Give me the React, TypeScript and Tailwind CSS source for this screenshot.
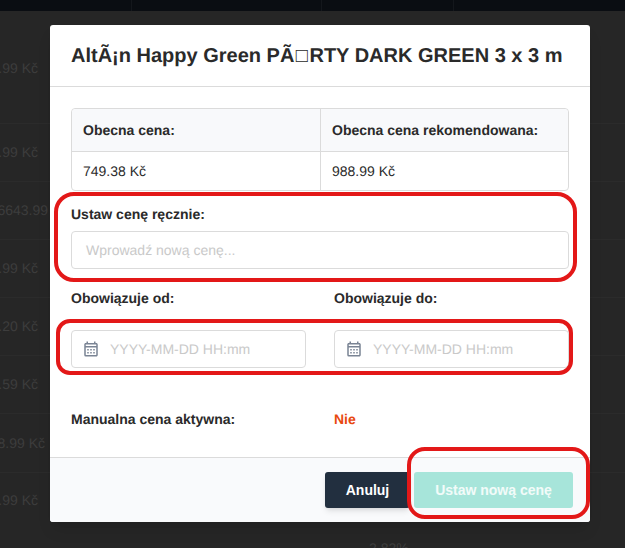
import { MdOutlineCalendarMonth } from 'react-icons/md'

const rows = [
  { h: 'h-[58px]', w: 'w-[38px]', text: '.99 Kč' },
  { h: 'h-[58px]', w: 'w-[48px]', text: '6643.99' },
  { h: 'h-[58px]', w: 'w-[38px]', text: '.99 Kč' },
  { h: 'h-[58px]', w: 'w-[38px]', text: '.20 Kč' },
  { h: 'h-[58px]', w: 'w-[38px]', text: '.59 Kč' },
  { h: 'h-[59px]', w: 'w-[45px]', text: '8.99 Kč' },
  { h: 'h-[56px]', w: 'w-[38px]', text: '.99 Kč' },
]

function DateField() {
  return (
    <div className="flex h-[38px] w-[235px] items-center rounded border border-[#dbdbdb] bg-white">
      <MdOutlineCalendarMonth className="ml-[10px] text-[18px] text-[#7a8494]" />
      <span className="ml-[10px] text-[14px] text-[#c9c9c9]">YYYY-MM-DD HH:mm</span>
    </div>
  )
}

export default function App() {
  return (
    <div className="relative h-[548px] w-[625px] overflow-hidden bg-[#262626] font-['Liberation_Sans',Arial,sans-serif] text-[14px] text-[#2a2a2a] [text-rendering:geometricPrecision]">
      {/* page behind the modal */}
      <div className="flex h-[11px] bg-[#0a0d12]">
        <div className="w-[132px] border-r border-[#14171c]" />
        <div className="w-[190px] border-r border-[#14171c]" />
        <div className="w-[132px] border-r border-[#14171c]" />
      </div>
      <div className="h-[112px] pt-[47px] text-[#3d3d3d]">
        <div className="flex w-[38px] justify-end whitespace-nowrap">.99 Kč</div>
      </div>
      {rows.map((r, i) => (
        <div key={i} className={`${r.h} flex items-center border-t border-[#2b2b2b] text-[#3d3d3d]`}>
          <div className={`flex ${r.w} justify-end whitespace-nowrap`}>{r.text}</div>
        </div>
      ))}
      <div className="absolute left-[369px] top-[538px] text-[#3d3d3d]">2.82%</div>

      {/* modal */}
      <div className="absolute left-[50px] top-[25px] flex h-[497px] w-[540px] flex-col overflow-hidden rounded-[3px] bg-white shadow-lg">
        <div className="flex h-[62px] shrink-0 items-center border-b border-[#dbdbdb] pl-[21px] text-[20px] font-bold whitespace-nowrap">
          <span>AltÃ¡n Happy Green PÃ<span className="mx-[1.5px] font-normal">□</span>RTY DARK GREEN 3 x 3 m</span>
        </div>

        <div className="flex-1 px-[21px] pt-[21px]">
          <div className="grid h-[83px] w-[498px] grid-cols-[249px_1fr] grid-rows-[43px_1fr] rounded border border-[#dbdbdb]">
            <div className="flex items-center rounded-tl border-r border-b border-[#dbdbdb] bg-[#f8f9fb] pl-[11px] font-bold">Obecna cena:</div>
            <div className="flex items-center rounded-tr border-b border-[#dbdbdb] bg-[#f8f9fb] pl-[11px] font-bold">Obecna cena rekomendowana:</div>
            <div className="flex items-center border-r border-[#dbdbdb] pl-[11px]">749.38 Kč</div>
            <div className="flex items-center pl-[11px]">988.99 Kč</div>
          </div>

          <div className="mt-[15px] font-bold leading-[16px]">Ustaw cenę ręcznie:</div>
          <div className="mt-[9px] flex h-[38px] w-[498px] items-center rounded border border-[#dbdbdb] pl-[14px] text-[14px] text-[#c9c9c9]">
            Wprowadź nową cenę...
          </div>

          <div className="mt-[21px] flex justify-between font-bold leading-[16px]">
            <div className="w-[235px]">Obowiązuje od:</div>
            <div className="w-[235px]">Obowiązuje do:</div>
          </div>
          <div className="mt-[24px] flex justify-between">
            <DateField />
            <DateField />
          </div>

          <div className="mt-[43px] flex leading-[16px]">
            <div className="w-[263px] font-bold">Manualna cena aktywna:</div>
            <div className="font-bold text-[#e8490f]">Nie</div>
          </div>
        </div>

        <div className="flex h-[65px] shrink-0 items-center justify-end border-t border-[#dbdbdb] bg-[#f9fafc] pr-[17px]">
          <button className="flex h-[36px] w-[85px] items-center justify-center rounded-[3px] bg-[#222f3f] font-bold text-white shadow-md">Anuluj</button>
          <button className="ml-[4px] flex h-[36px] w-[159px] items-center justify-center rounded-[3px] bg-[#a7e5da] font-bold text-white/85">Ustaw nową cenę</button>
        </div>
      </div>

      {/* red annotations drawn over the screenshot */}
      <div className="absolute left-[54px] top-[192px] h-[90px] w-[523px] rounded-[20px] border-[4px] border-[#e31818]" />
      <div className="absolute left-[56px] top-[319px] h-[56px] w-[517px] rounded-[14px] border-[4px] border-[#e31818]" />
      <div className="absolute left-[407px] top-[447px] h-[72px] w-[183px] rounded-[18px] border-[4px] border-[#e31818]" />
    </div>
  )
}
